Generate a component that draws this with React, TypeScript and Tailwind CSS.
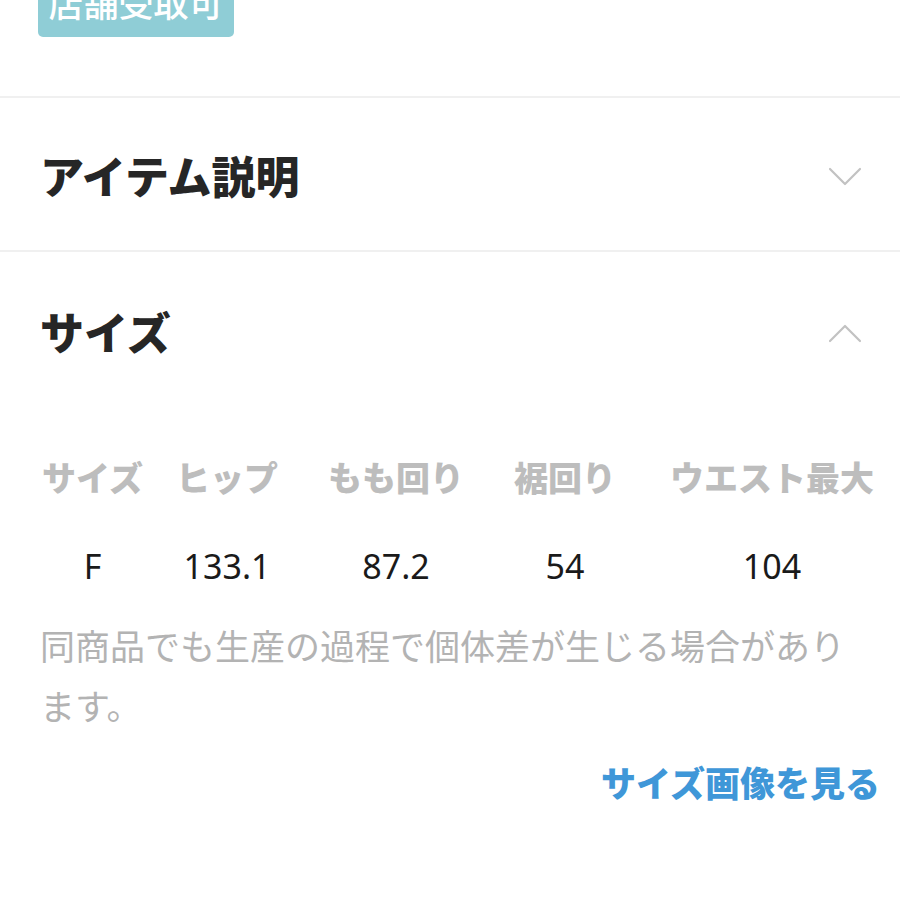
const jp = "font-['Noto_Sans','Noto_Sans_CJK_JP',sans-serif]";

type Row = { label: string; value: string };

const sizeRows: Row[] = [
  { label: "サイズ", value: "F" },
  { label: "ヒップ", value: "133.1" },
  { label: "もも回り", value: "87.2" },
  { label: "裾回り", value: "54" },
  { label: "ウエスト最大", value: "104" },
];

function Chevron({ up }: { up?: boolean }) {
  return (
    <svg width="34" height="20" viewBox="0 0 34 20" fill="none" className="shrink-0">
      <path
        d={up ? "M2 18 L17 3 L32 18" : "M2 2 L17 17 L32 2"}
        stroke="#c2c2c2"
        strokeWidth="2.2"
        strokeLinecap="round"
        strokeLinejoin="round"
      />
    </svg>
  );
}

export default function App() {
  return (
    <div className={`flex w-[900px] h-[900px] flex-col overflow-hidden bg-white ${jp}`}>
      <div className="flex h-[96px] shrink-0 flex-col px-[38px]">
        <div className="mt-[-31px] flex h-[68px] w-[196px] items-center justify-center rounded-[5px] bg-[#8fcdd6] text-[35px] leading-none font-medium text-white">
          店舗受取可
        </div>
      </div>
      <div className="h-[2px] shrink-0 bg-[#f0f0f0]" />

      <div className="flex h-[152px] shrink-0 items-center justify-between pt-[6px] pl-10 pr-[38px]">
        <h2 className="text-[44px] font-black leading-none text-[#262626]">アイテム説明</h2>
        <Chevron />
      </div>
      <div className="h-[2px] shrink-0 bg-[#f0f0f0]" />

      <div className="flex h-[162px] shrink-0 items-center justify-between pl-10 pr-[38px]">
        <h2 className="text-[44px] font-black leading-none text-[#262626]">サイズ</h2>
        <Chevron up />
      </div>

      <div className="px-10">
        <div className="grid grid-cols-[105px_164px_174px_164px_250px]">
          {sizeRows.map((r) => (
            <div key={r.label} className="flex h-[128px] items-center justify-center text-[34px] font-black leading-none text-[#bdbdbd] whitespace-nowrap">
              {r.label}
            </div>
          ))}
          {sizeRows.map((r) => (
            <div key={r.label + "v"} className="flex h-[48px] items-center justify-center text-[34px] leading-none text-[#1a1a1a]">
              {r.value}
            </div>
          ))}
        </div>

        <p className="mt-[27px] text-[35px] leading-[60px] text-[#b3b3b3]">
          同商品でも生産の過程で個体差が生じる場合があります。
        </p>

        <div className="mt-[23px] flex justify-end mr-[-20px]">
          <span className="text-[35px] font-black leading-[48px] text-[#3f97d8]">サイズ画像を見る</span>
        </div>
      </div>
    </div>
  );
}
